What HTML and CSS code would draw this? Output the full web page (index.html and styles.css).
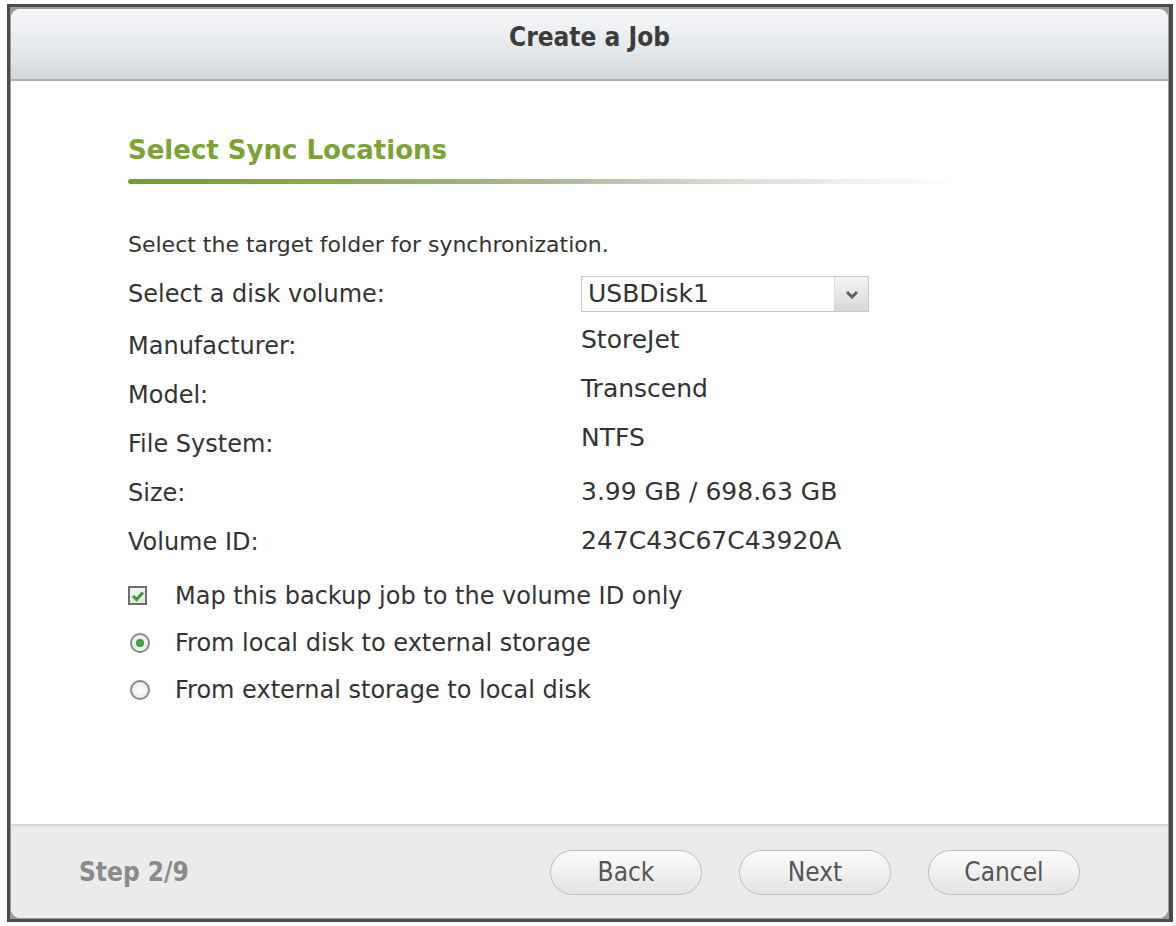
FILE: index.html
```html
<!DOCTYPE html>
<html>
<head>
    <meta http-equiv="Content-Type" content="text/html; charset=UTF-8">
    <title>Create a Job</title>
    <link rel="stylesheet" href="styles.css">
</head>

<body>
<div class="window">
  <div class="dialog">
    <div class="titlebar">Create a Job</div>

    <div class="content">
      <h2 class="step-title">Select Sync Locations</h2>
      <div class="title-rule"></div>

      <p class="intro">Select the target folder for synchronization.</p>

      <div class="fields">
        <div class="label first">Select a disk volume:</div>
        <div class="value first">
          <div class="combo">
            <span class="combo-text">USBDisk1</span>
            <span class="combo-arrow">
              <svg width="14" height="9" viewBox="0 0 14 9"><path d="M2 2 L7 7 L12 2" fill="none" stroke="#5f5f5f" stroke-width="3"/></svg>
            </span>
          </div>
        </div>

        <div class="label">Manufacturer:</div>
        <div class="value up">StoreJet</div>

        <div class="label">Model:</div>
        <div class="value up">Transcend</div>

        <div class="label">File System:</div>
        <div class="value up">NTFS</div>

        <div class="label">Size:</div>
        <div class="value">3.99 GB / 698.63 GB</div>

        <div class="label">Volume ID:</div>
        <div class="value">247C43C67C43920A</div>
      </div>

      <div class="options">
        <div class="option">
          <span class="checkbox">
            <svg width="14" height="12" viewBox="0 0 14 12"><path d="M2 6 L5.5 9.5 L12 2.5" fill="none" stroke="#3f9a2f" stroke-width="3"/></svg>
          </span>
          <span>Map this backup job to the volume ID only</span>
        </div>
        <div class="option">
          <span class="radio on"></span>
          <span>From local disk to external storage</span>
        </div>
        <div class="option">
          <span class="radio"></span>
          <span>From external storage to local disk</span>
        </div>
      </div>
    </div>

    <div class="footer">
      <div class="step">Step 2/9</div>
      <div class="buttons">
        <button class="btn">Back</button>
        <button class="btn">Next</button>
        <button class="btn">Cancel</button>
      </div>
    </div>
  </div>
</div>
</body>
</html>
```

FILE: styles.css
```css
body{
  margin:0;
  background:#ffffff;
  font-family:"DejaVu Sans", Verdana, sans-serif;
  color:#333333;
}

.window{
  margin:4px 0 0 7px;
  width:1166px;
  height:918px;
  box-sizing:border-box;
  border:3px solid #4b4b4b;
  border-right-width:4px;
  background:#9a9a9a;
  padding:2px 1px 1px 1px;
}

.dialog{
  height:100%;
  border-radius:9px;
  overflow:hidden;
  background:#ffffff;
  display:flex;
  flex-direction:column;
}

.titlebar
  {
  height:70px;
  flex:none;
  border-bottom:2px solid #a9adb1;
  background:linear-gradient(#f6f7f9, #e6e9ec 55%, #d2d7dc);
  font-family:"DejaVu Sans Condensed", "DejaVu Sans", sans-serif;
  font-weight:bold;
  font-size:26px;
  color:#3b3b3b;
  text-align:center;
  line-height:56px;
  }

.content
  {
  flex:1;
  padding:53px 0 0 117px;
  }

.step-title
  {
  margin:0;
  font-family:"DejaVu Sans", sans-serif;
  font-weight:bold;
  font-size:26px;
  color:#7ba232;
  line-height:32px;
  }

.title-rule
  {
  margin-top:13px;
  width:830px;
  height:5px;
  border-radius:3px;
  background:linear-gradient(to right, #76993a, #8aab4e 25%, #aab69c 50%, #dde1d8 75%, rgba(255,255,255,0));
  }

.intro
  {
  margin:47px 0 0 0;
  font-size:22px;
  line-height:28px;
  }

.fields
  {
  margin-top:17px;
  display:grid;
  grid-template-columns:453px 320px;
  grid-template-rows:46px;
  grid-auto-rows:49px;
  font-size:24px;
  }

.fields .first
  {
  height:36px;
  }

.label
  {
  line-height:49px;
  }

.label.first
  {
  line-height:36px;
  }

.value
  {
  font-size:25px;
  line-height:46px;
  }

.value.up
  {
  line-height:35px;
  }

.combo
  {
  width:288px;
  height:36px;
  box-sizing:border-box;
  border:1px solid #c8c8c8;
  display:flex;
  background:#ffffff;
  }

.combo-text
  {
  flex:1;
  padding-left:6px;
  line-height:34px;
  font-size:25px;
  color:#333333;
  }

.combo-arrow
  {
  width:33px;
  border-left:1px solid #dddddd;
  background:linear-gradient(#f4f4f4, #d8d8d8);
  display:flex;
  align-items:center;
  justify-content:center;
  }

.options
  {
  margin-top:5px;
  font-size:24px;
  }

.option
  {
  display:flex;
  align-items:center;
  height:47px;
  }

.checkbox
  {
  width:15px;
  height:15px;
  border:2px solid #6e6e6e;
  background:linear-gradient(#f3f7f1, #dfe9da);
  margin:0 28px 0 0;
  display:flex;
  align-items:center;
  justify-content:center;
  }

.radio
  {
  width:16px;
  height:16px;
  border:2px solid #8a8a8a;
  border-radius:50%;
  background:radial-gradient(#ffffff, #e4e4e4);
  margin:0 25px 0 2px;
  display:flex;
  align-items:center;
  justify-content:center;
  }

.radio.on::after
  {
  content:"";
  width:8px;
  height:8px;
  border-radius:50%;
  background:radial-gradient(#46b04a, #2f8f34);
  }

.radio.on
  {
  background:radial-gradient(#d8f0d4, #f4f7f3);
  }

.footer
  {
  height:92px;
  flex:none;
  border-top:2px solid #d6d6d6;
  background:#ebebeb;
  display:flex;
  align-items:center;
  justify-content:space-between;
  padding:0 88px 0 68px;
  }

.step
  {
  font-family:"DejaVu Sans Condensed", "DejaVu Sans", sans-serif;
  font-weight:bold;
  font-size:26px;
  color:#8a8a8a;
  }

.buttons
  {
  display:flex;
  gap:37px;
  }

.btn
  {
  width:152px;
  height:45px;
  border:1px solid #bdbdbd;
  border-radius:23px;
  background:linear-gradient(#fbfbfb, #eeeeee 60%, #e2e2e2);
  font-family:"DejaVu Sans Condensed", "DejaVu Sans", sans-serif;
  font-size:26px;
  color:#555555;
  }
```
